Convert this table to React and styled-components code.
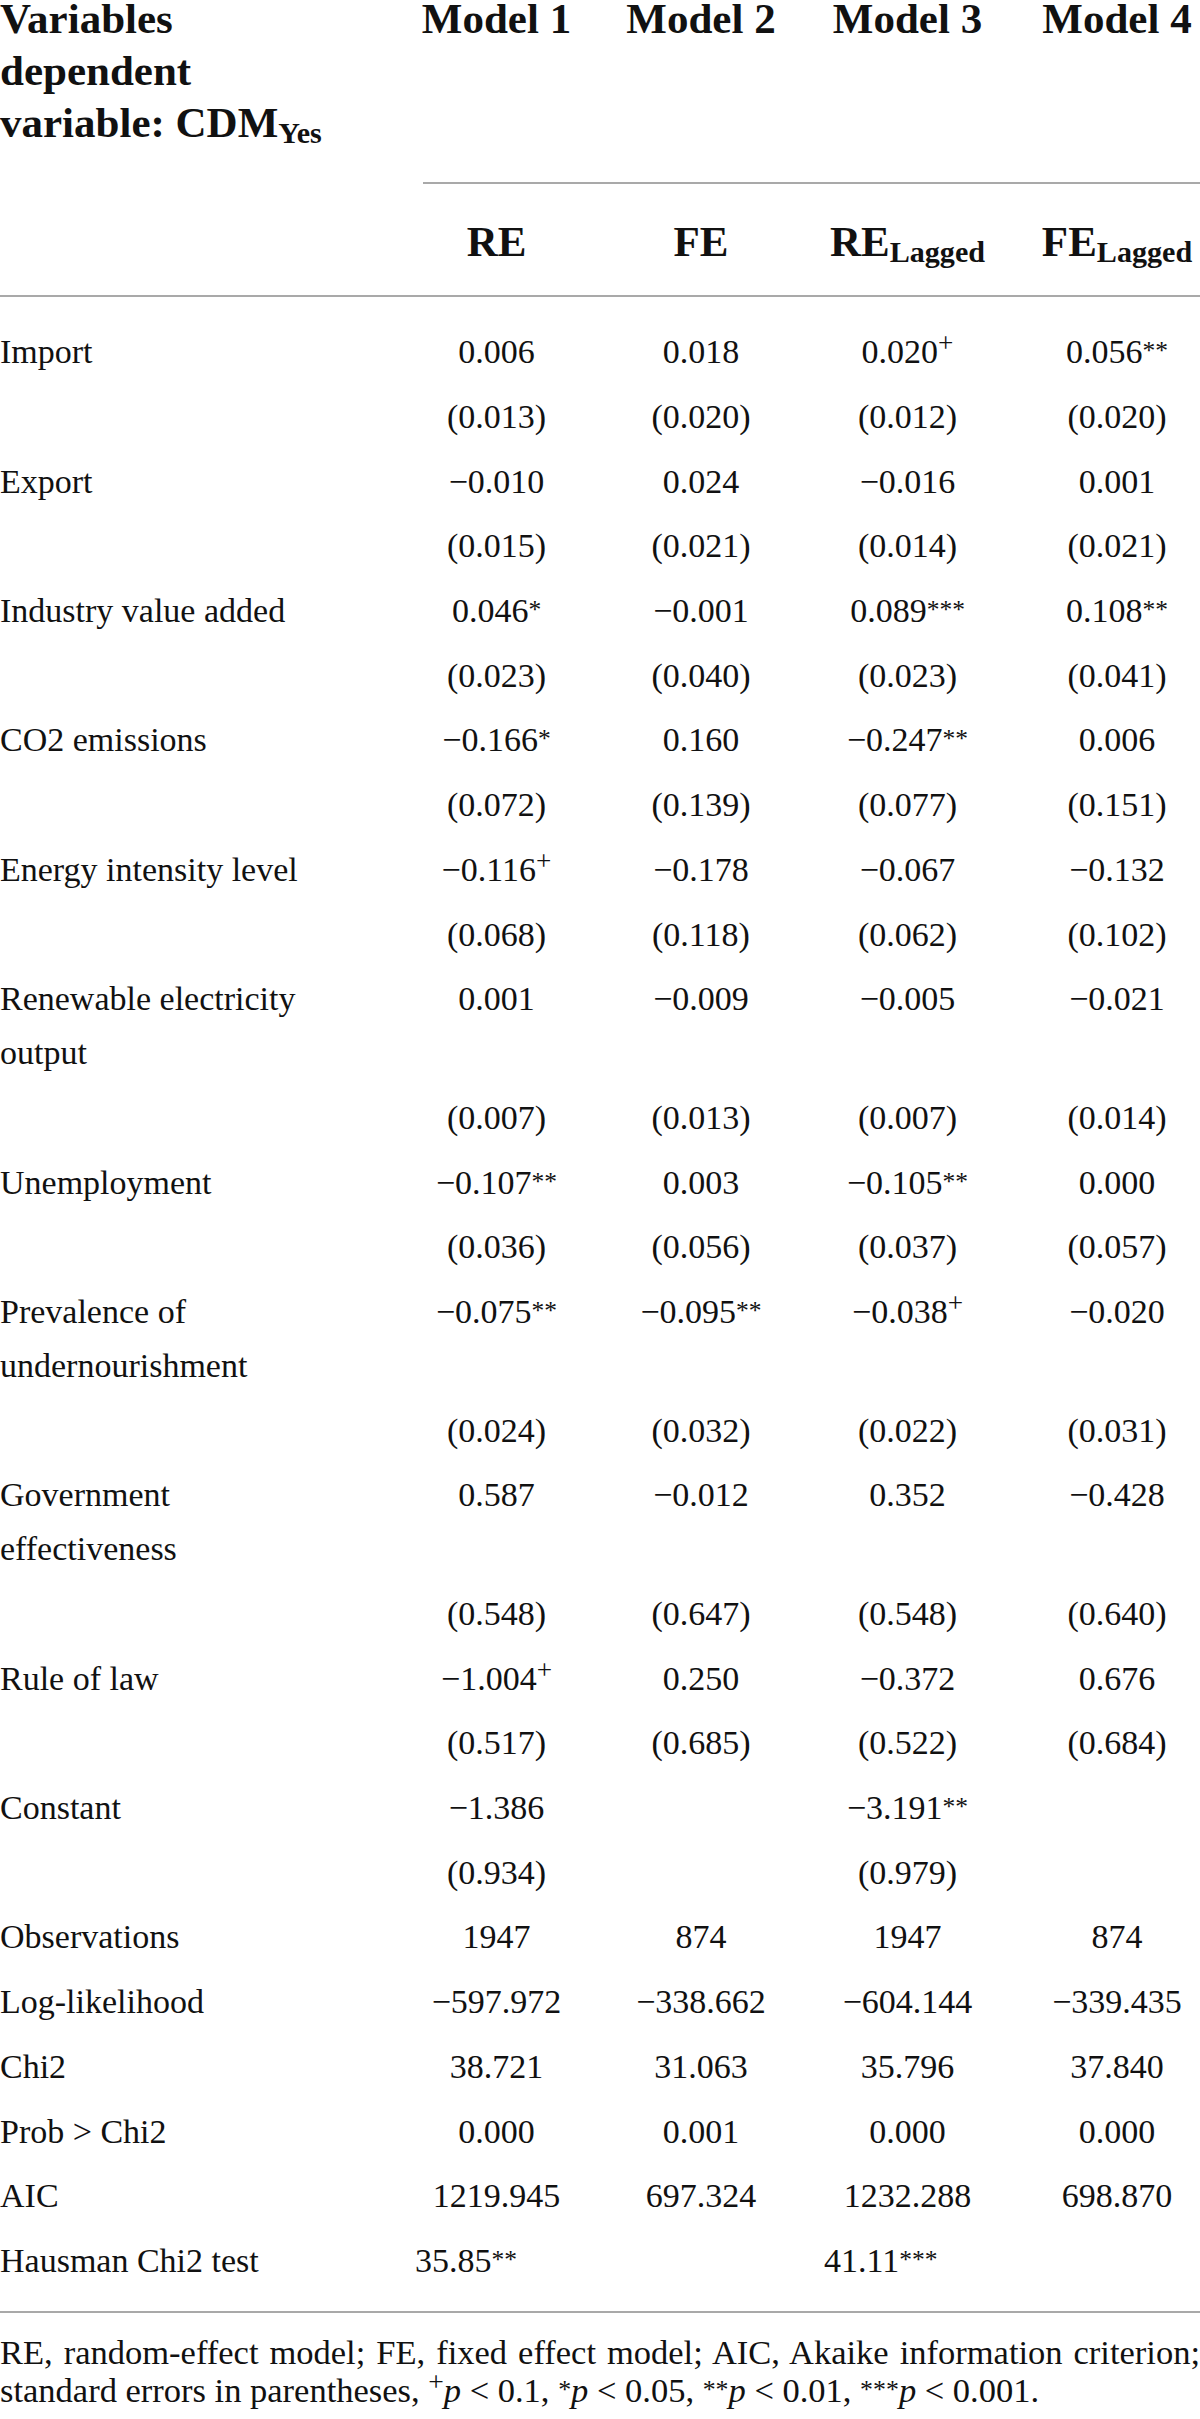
import React from "react";
import styled, { createGlobalStyle } from "styled-components";

const COLS = "394px 205px 204px 209px 188px";
const RULE = "#a9a9a9";

const GlobalStyle = createGlobalStyle`
  html, body {
    margin: 0;
    padding: 0;
    background: #fff;
  }
  body {
    font-family: "Liberation Serif", "Times New Roman", serif;
    color: #111;
  }
`;

const Table = styled.div`
  width: 1200px;
  margin-top: -7px;
`;

const Head = styled.div`
  display: grid;
  grid-template-columns: ${COLS};
  font-weight: 700;
  font-size: 43px;
  line-height: 52px;
  border-bottom: 2px solid ${RULE};
`;

const HeadLabel = styled.div`
  grid-column: 1;
  grid-row: 1 / span 3;
  padding-right: 40px;
`;

const HeadCell = styled.div`
  grid-row: ${p => (p.$sub ? 3 : 1)};
  text-align: center;
  white-space: nowrap;
  padding: ${p => (p.$sub ? "32px 0 27px" : "0 0 137px")};
  padding-left: ${p => (p.$last ? "22px" : "0")};
`;

const SpanRule = styled.div`
  grid-row: 2;
  grid-column: 2 / -1;
  margin-left: 29px;
  height: 2px;
  background: ${RULE};
`;

const Body = styled.div`
  padding: 23px 0 18px;
  border-bottom: 2px solid ${RULE};
`;

const Row = styled.div`
  display: grid;
  grid-template-columns: ${COLS};
  padding: 5.35px 0;
  font-size: 34px;
  line-height: 54px;
`;

const Label = styled.div`
  padding-right: 50px;
`;

const Cell = styled.div`
  white-space: nowrap;
  text-align: ${p => (p.$align === "left" ? "left" : "center")};
  padding-left: ${p => (p.$align === "left" ? "21px" : p.$last ? "22px" : "0")};
`;

const Mark = styled.span`
  font-size: ${p => (p.$plus ? "0.8em" : "0.75em")};
  vertical-align: ${p => (p.$plus ? "0.4em" : "0.14em")};
  line-height: 0;
`;

const Sub = styled.span`
  font-size: 0.7em;
  vertical-align: -0.2em;
  line-height: 0;
`;

const Note = styled.p`
  margin: 20px 0 0;
  font-size: 34.5px;
  line-height: 38px;
  text-align: justify;
`;

const P = styled.i`
  font-style: italic;
`;

const rows = [
  ["Import", "0.006", "0.018", "0.020+", "0.056**"],
  ["", "(0.013)", "(0.020)", "(0.012)", "(0.020)"],
  ["Export", "−0.010", "0.024", "−0.016", "0.001"],
  ["", "(0.015)", "(0.021)", "(0.014)", "(0.021)"],
  ["Industry value added", "0.046*", "−0.001", "0.089***", "0.108**"],
  ["", "(0.023)", "(0.040)", "(0.023)", "(0.041)"],
  ["CO2 emissions", "−0.166*", "0.160", "−0.247**", "0.006"],
  ["", "(0.072)", "(0.139)", "(0.077)", "(0.151)"],
  ["Energy intensity level", "−0.116+", "−0.178", "−0.067", "−0.132"],
  ["", "(0.068)", "(0.118)", "(0.062)", "(0.102)"],
  ["Renewable electricity output", "0.001", "−0.009", "−0.005", "−0.021"],
  ["", "(0.007)", "(0.013)", "(0.007)", "(0.014)"],
  ["Unemployment", "−0.107**", "0.003", "−0.105**", "0.000"],
  ["", "(0.036)", "(0.056)", "(0.037)", "(0.057)"],
  ["Prevalence of undernourishment", "−0.075**", "−0.095**", "−0.038+", "−0.020"],
  ["", "(0.024)", "(0.032)", "(0.022)", "(0.031)"],
  ["Government effectiveness", "0.587", "−0.012", "0.352", "−0.428"],
  ["", "(0.548)", "(0.647)", "(0.548)", "(0.640)"],
  ["Rule of law", "−1.004+", "0.250", "−0.372", "0.676"],
  ["", "(0.517)", "(0.685)", "(0.522)", "(0.684)"],
  ["Constant", "−1.386", "", "−3.191**", ""],
  ["", "(0.934)", "", "(0.979)", ""],
  ["Observations", "1947", "874", "1947", "874"],
  ["Log-likelihood", "−597.972", "−338.662", "−604.144", "−339.435"],
  ["Chi2", "38.721", "31.063", "35.796", "37.840"],
  ["Prob > Chi2", "0.000", "0.001", "0.000", "0.000"],
  ["AIC", "1219.945", "697.324", "1232.288", "698.870"],
  ["Hausman Chi2 test", "35.85**", "", "41.11***", "", "left"]
];

const models = ["Model 1", "Model 2", "Model 3", "Model 4"];
const kinds = [["RE"], ["FE"], ["RE", "Lagged"], ["FE", "Lagged"]];

function Value({ v }) {
  const m = v.match(/^(.*?)([+*]+)?$/);
  return (
    <>
      {m[1]}
      {m[2] && <Mark $plus={m[2] === "+"}>{m[2]}</Mark>}
    </>
  );
}

export default function App() {
  return (
    <>
      <GlobalStyle />
      <Table>
        <Head>
          <HeadLabel>
            Variables dependent variable: CDM<Sub>Yes</Sub>
          </HeadLabel>
          {models.map((m, i) => (
            <HeadCell key={m} $last={i === 3}>{m}</HeadCell>
          ))}
          <SpanRule />
          {kinds.map(([k, s], i) => (
            <HeadCell key={i} $sub $last={i === 3} style={{ gridColumn: i + 2 }}>
              {k}
              {s && <Sub>{s}</Sub>}
            </HeadCell>
          ))}
        </Head>
        <Body>
          {rows.map((r, i) => (
            <Row key={i}>
              <Label>{r[0]}</Label>
              {r.slice(1, 5).map((v, j) => (
                <Cell key={j} $align={r[5]} $last={j === 3}>
                  <Value v={v} />
                </Cell>
              ))}
            </Row>
          ))}
        </Body>
        <Note>
          RE, random-effect model; FE, fixed effect model; AIC, Akaike information criterion;
          standard errors in parentheses, <Mark $plus>+</Mark><P>p</P> &lt; 0.1, <Mark>*</Mark>
          <P>p</P> &lt; 0.05, <Mark>**</Mark><P>p</P> &lt; 0.01, <Mark>***</Mark><P>p</P> &lt; 0.001.
        </Note>
      </Table>
    </>
  );
}
